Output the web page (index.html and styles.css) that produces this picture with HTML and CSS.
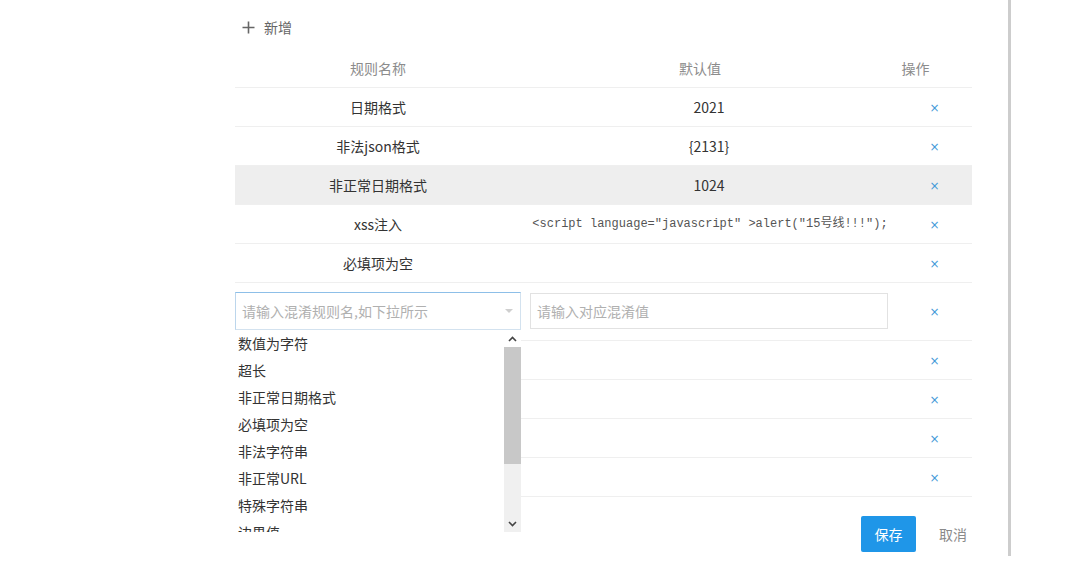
FILE: index.html
```html
<!DOCTYPE html>
<html lang="zh-CN">
<head>
<meta charset="utf-8">
<title>规则配置</title>
<link rel="stylesheet" href="styles.css">
</head>
<body>
<div class="page">
  <div class="content">
    <div class="toolbar">
      <span class="plus">
        <svg width="13" height="13" viewBox="0 0 13 13"><path d="M6.5 0.5v12M0.5 6.5h12" stroke="#666" stroke-width="1.6" fill="none"/></svg>
      </span>
      <span class="add-text">新增</span>
    </div>
    <div class="table">
      <div class="row head">
        <div class="c1">规则名称</div>
        <div class="c2 h2">默认值</div>
        <div class="c3 h3">操作</div>
      </div>
      <div class="row">
        <div class="c1">日期格式</div>
        <div class="c2">2021</div>
        <div class="c3"><span class="del">×</span></div>
      </div>
      <div class="row">
        <div class="c1">非法json格式</div>
        <div class="c2">{2131}</div>
        <div class="c3"><span class="del">×</span></div>
      </div>
      <div class="row hover">
        <div class="c1">非正常日期格式</div>
        <div class="c2">1024</div>
        <div class="c3"><span class="del">×</span></div>
      </div>
      <div class="row">
        <div class="c1">xss注入</div>
        <div class="c2 mono">&lt;script language="javascript" &gt;alert("15号线!!!");</div>
        <div class="c3"><span class="del">×</span></div>
      </div>
      <div class="row">
        <div class="c1">必填项为空</div>
        <div class="c2"></div>
        <div class="c3"><span class="del">×</span></div>
      </div>
      <div class="row edit">
        <div class="c1 cell-select">
          <div class="select">
            <span class="ph">请输入混淆规则名,如下拉所示</span>
            <span class="caret"></span>
          </div>
          <div class="dropdown">
            <ul class="options">
              <li>数值为字符</li>
              <li>超长</li>
              <li>非正常日期格式</li>
              <li>必填项为空</li>
              <li>非法字符串</li>
              <li>非正常URL</li>
              <li>特殊字符串</li>
              <li>边界值</li>
            </ul>
            <div class="scrollbar">
              <div class="sb-btn">
                <svg width="9" height="6" viewBox="0 0 9 6"><path d="M1 5l3.5-3.5L8 5" stroke="#444" stroke-width="1.6" fill="none"/></svg>
              </div>
              <div class="sb-thumb"></div>
              <div class="sb-track"></div>
              <div class="sb-btn">
                <svg width="9" height="6" viewBox="0 0 9 6"><path d="M1 1l3.5 3.5L8 1" stroke="#444" stroke-width="1.6" fill="none"/></svg>
              </div>
            </div>
          </div>
        </div>
        <div class="c2 cell-input">
          <div class="input"><span class="ph">请输入对应混淆值</span></div>
        </div>
        <div class="c3 cell-del"><span class="del">×</span></div>
      </div>
      <div class="row">
        <div class="c1"></div>
        <div class="c2"></div>
        <div class="c3"><span class="del">×</span></div>
      </div>
      <div class="row">
        <div class="c1"></div>
        <div class="c2"></div>
        <div class="c3"><span class="del">×</span></div>
      </div>
      <div class="row">
        <div class="c1"></div>
        <div class="c2"></div>
        <div class="c3"><span class="del">×</span></div>
      </div>
      <div class="row">
        <div class="c1"></div>
        <div class="c2"></div>
        <div class="c3"><span class="del">×</span></div>
      </div>
    </div>
    <div class="footer">
      <button class="btn-save">保存</button>
      <span class="btn-cancel">取消</span>
    </div>
  </div>
  <div class="vline"></div>
</div>
</body>
</html>
```

FILE: styles.css
```css
html, body {
  margin: 0;
  padding: 0;
  background: #ffffff;
}
body {
  font-family: "Noto Sans CJK SC", "Noto Sans", sans-serif;
  font-size: 14px;
  color: #333;
  width: 1080px;
  height: 586px;
  overflow: hidden;
}
.page {
  display: flex;
  align-items: flex-start;
}
.content {
  margin-left: 235px;
  width: 737px;
}
.vline {
  width: 3px;
  height: 556px;
  background: #cdcdcd;
  margin-left: 36px;
}
.toolbar {
  height: 49px;
  box-sizing: border-box;
  padding-top: 5px;
  padding-left: 7px;
  display: flex;
  align-items: center;
  color: #666;
}
.plus {
  display: flex;
  width: 13px;
  height: 13px;
}
.add-text {
  margin-left: 9px;
  font-size: 14px;
  color: #666;
}
.table {
  display: flex;
  flex-direction: column;
}
.row {
  display: grid;
  grid-template-columns: 286px 376px 75px;
  height: 38px;
  border-bottom: 1px solid #efefef;
  align-items: center;
}
.row > div {
  text-align: center;
  line-height: 20px;
}
.row.head {
  color: #8c8c8c;
}
.row.head .h2 {
  padding-right: 18px;
}
.row.head .h3 {
  padding-right: 38px;
}
.row.hover {
  background: #eeeeee;
}
.mono {
  font-family: "Liberation Mono", "Noto Sans CJK SC", monospace;
  font-size: 12px;
  color: #555;
  white-space: nowrap;
  padding-left: 2px;
}
.del {
  color: #3f9ad8;
  font-family: "DejaVu Sans", sans-serif;
  font-size: 12px;
}
.row.edit {
  box-sizing: border-box;
  height: 58px;
  padding-top: 9px;
  align-items: start;
}
.cell-select {
  position: relative;
  height: 38px;
}
.select {
  box-sizing: border-box;
  height: 38px;
  border: 1px solid #d3e2ef;
  border-top-color: #8dbfe8;
  border-left-color: #bcd6ec;
  display: flex;
  align-items: center;
  padding-left: 6px;
  padding-right: 6px;
  justify-content: space-between;
}
.ph {
  color: #b0b0b0;
  font-size: 14px;
}
.caret {
  width: 0;
  height: 0;
  border-left: 4px solid transparent;
  border-right: 4px solid transparent;
  border-top: 4px solid #cfcfcf;
  margin-right: 1px;
}
.cell-input {
  height: 38px;
  padding: 0 9px;
  display: flex;
  align-items: center;
}
.cell-del {
  height: 40px;
  display: flex;
  align-items: center;
  justify-content: center;
}
.input {
  box-sizing: border-box;
  width: 358px;
  height: 36px;
  border: 1px solid #e2e2e2;
  display: flex;
  align-items: center;
  padding-left: 6px;
  text-align: left;
}
.dropdown {
  position: absolute;
  top: 38px;
  left: 0;
  width: 286px;
  height: 202px;
  background: #fff;
  overflow: hidden;
  z-index: 5;
  text-align: left;
}
.options {
  list-style: none;
  margin: 0;
  padding: 0;
}
.options li {
  height: 27px;
  line-height: 27px;
  padding-left: 3px;
  color: #333;
  font-size: 14px;
}
.scrollbar {
  position: absolute;
  top: 0;
  right: 0;
  width: 17px;
  height: 202px;
  display: flex;
  flex-direction: column;
  background: #f0f0f0;
}
.sb-btn {
  height: 17px;
  display: flex;
  align-items: center;
  justify-content: center;
  background: #f0f0f0;
}
.sb-btn:first-child {
  background: #ffffff;
}
.sb-thumb {
  height: 117px;
  background: #c8c8c8;
}
.sb-track {
  flex: 1;
  background: #f0f0f0;
}
.footer {
  display: flex;
  justify-content: flex-end;
  align-items: center;
  padding-top: 19px;
  padding-right: 5px;
}
.btn-save {
  width: 55px;
  height: 36px;
  border: none;
  border-radius: 2px;
  background: #1f96e8;
  color: #fff;
  font-family: "Noto Sans CJK SC", sans-serif;
  font-size: 14px;
  padding: 0;
}
.btn-cancel {
  margin-left: 23px;
  color: #8a8a8a;
  font-size: 14px;
}
```
